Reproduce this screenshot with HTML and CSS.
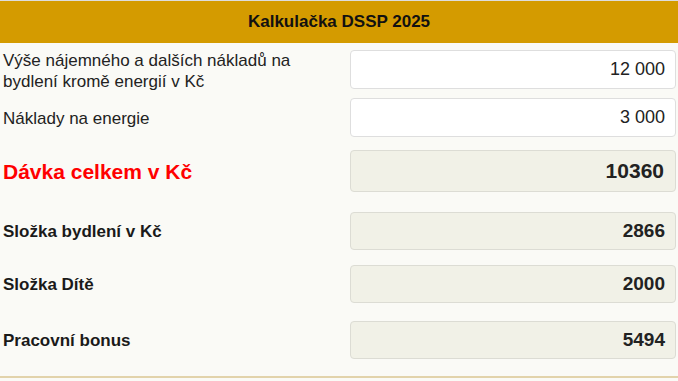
FILE: index.html
```html
<!DOCTYPE html>
<html lang="cs">
<head>
    <meta charset="UTF-8">
    <meta name="viewport" content="width=device-width, initial-scale=1.0">
    <title>Kalkulačka DSSP 2025</title>
    <link rel="stylesheet" href="styles.css">
</head>
<body>
    <div class="calc">
        <div class="calc-header">Kalkulačka DSSP 2025</div>

        <div class="row row-first">
            <label class="label" for="rent">Výše nájemného a dalších nákladů na bydlení kromě energií v Kč</label>
            <input class="field" id="rent" type="text" value="12 000">
        </div>
        <div class="row row-energy">
            <label class="label" for="energy">Náklady na energie</label>
            <input class="field" id="energy" type="text" value="3 000">
        </div>

        <div class="row row-total">
            <div class="label label-total">Dávka celkem v Kč</div>
            <div class="output output-total">10360</div>
        </div>
        <div class="row row-housing">
            <div class="label label-bold">Složka bydlení v Kč</div>
            <div class="output">2866</div>
        </div>
        <div class="row row-child">
            <div class="label label-bold">Složka Dítě</div>
            <div class="output">2000</div>
        </div>
        <div class="row row-bonus">
            <div class="label label-bold">Pracovní bonus</div>
            <div class="output">5494</div>
        </div>
    </div>
</body>
</html>
```

FILE: styles.css
```css
body {
    margin: 0;
    font-family: "Liberation Sans", Arial, sans-serif;
    background-color: #fafaf6;
    color: #222222;
}
.calc {
    border-top: 1px solid #dddddd;
    border-bottom: 2px solid #e2d3ab;
    padding-bottom: 17px;
}
.calc-header {
    height: 42px;
    line-height: 42px;
    background-color: #d49b00;
    color: #111111;
    font-size: 17px;
    font-weight: bold;
    text-align: center;
}
.row {
    display: grid;
    grid-template-columns: 1fr 326px;
    column-gap: 6px;
    align-items: center;
    padding-right: 2px;
}
.row-first {
    align-items: start;
    margin-top: 7px;
}
.row-energy { margin-top: 6px; }
.row-total { margin-top: 13px; }
.row-housing { margin-top: 20px; }
.row-child { margin-top: 15px; }
.row-bonus { margin-top: 18px; }

.label {
    padding-left: 3px;
    padding-right: 20px;
    font-size: 17px;
    line-height: 21px;
}
.row-energy .label,
.label-bold,
.label-total {
    padding-top: 1px;
}
.label-bold {
    font-weight: bold;
    color: #1a1a1a;
}
.label-total {
    font-size: 21px;
    font-weight: bold;
    color: #ff0000;
}
.field {
    box-sizing: border-box;
    width: 100%;
    height: 39px;
    margin: 0;
    padding: 0 10px;
    border: 1px solid #dedede;
    border-radius: 4px;
    background-color: #ffffff;
    font-family: inherit;
    font-size: 18px;
    color: #222222;
    text-align: right;
}
.output {
    box-sizing: border-box;
    height: 38px;
    line-height: 36px;
    padding: 0 10px;
    border: 1px solid #dcdcd4;
    border-radius: 4px;
    background-color: #f1f1e7;
    font-size: 19px;
    font-weight: bold;
    text-align: right;
}
.output-total {
    height: 42px;
    line-height: 40px;
    font-size: 21px;
    padding-right: 11px;
}
```
